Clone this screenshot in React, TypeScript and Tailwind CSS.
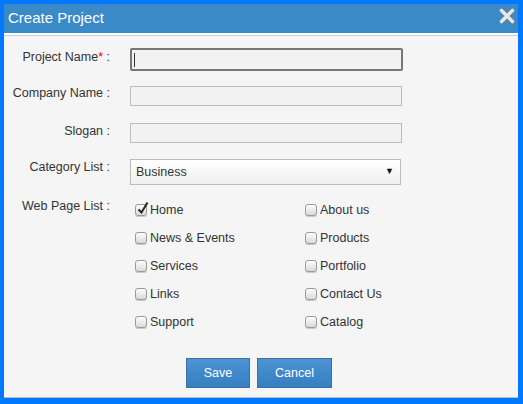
import React from "react";

const font = { fontFamily: '"Liberation Sans", Arial, sans-serif' };

function Box({ checked }: { checked?: boolean }) {
  return (
    <span className="relative inline-block w-[12px] h-[12px] rounded-[3px] border border-[#9a9a9a] bg-gradient-to-b from-[#fdfdfd] to-[#d9d9d9] shadow-[0_1px_0_#c8c8c8]">
      {checked && (
        <svg className="absolute left-[1px] top-[-4px]" width="12" height="14" viewBox="0 0 12 14">
          <path d="M1.5 8.5 L4.5 11.5 L10.5 1.5" fill="none" stroke="#222" strokeWidth="2" />
        </svg>
      )}
    </span>
  );
}

function Check({ label, checked }: { label: string; checked?: boolean }) {
  return (
    <div className="flex items-center h-[28px]">
      <Box checked={checked} />
      <span className="ml-[3px] text-[12.5px] text-[#333]">{label}</span>
    </div>
  );
}

export default function App() {
  const left = ["Home", "News & Events", "Services", "Links", "Support"];
  const right = ["About us", "Products", "Portfolio", "Contact Us", "Catalog"];
  return (
    <div className="w-[523px] h-[404px] bg-[#0078ff] pt-[4px] pl-[4px]" style={font}>
      <div className="w-[514px] h-[394px] bg-[#f5f5f5] flex flex-col">
        <div className="h-[29px] bg-[#3a8ac7] flex items-center justify-between pl-[4px] pr-[3px]">
          <span className="text-white text-[15px]">Create Project</span>
          <svg width="16" height="16" viewBox="0 0 16 16" className="mt-[-6px]">
            <path d="M2.5 2.5 L13.5 13.5 M13.5 2.5 L2.5 13.5" stroke="#8a8a8a" strokeWidth="4.5" strokeLinecap="round" />
            <path d="M2.5 2.5 L13.5 13.5 M13.5 2.5 L2.5 13.5" stroke="#e8e8e8" strokeWidth="3.2" strokeLinecap="round" />
          </svg>
        </div>
        <div className="h-[2px] bg-white" />
        <div className="h-[1px] bg-[#cfcfcf]" />
        <div className="flex-1 flex flex-col pt-[12px] text-[12.5px] text-[#333]">
          <div className="flex items-start">
            <div className="w-[106px] text-right">
              Project Name<span className="text-[#e00]">*</span> :
            </div>
            <div className="ml-[20px] w-[273px] h-[23px] border-2 border-[#777] rounded-[2px] bg-[#f2f2f2] flex items-center pl-[2px]">
              <span className="w-[1px] h-[14px] bg-[#333]" />
            </div>
          </div>
          <div className="flex items-start mt-[15px]">
            <div className="w-[106px] text-right mt-[-2px]">Company Name :</div>
            <div className="ml-[20px] w-[272px] h-[20px] border border-[#bbb] bg-[#f2f2f2]" />
          </div>
          <div className="flex items-start mt-[17px]">
            <div className="w-[106px] text-right mt-[-1px]">Slogan :</div>
            <div className="ml-[20px] w-[272px] h-[20px] border border-[#bbb] bg-[#f2f2f2]" />
          </div>
          <div className="flex items-start mt-[15px]">
            <div className="w-[106px] text-right">Category List :</div>
            <div className="ml-[20px] mt-[1px] w-[271px] h-[26px] border border-[#bbb] bg-gradient-to-b from-white to-[#f0f0f0] flex items-center justify-between pl-[5px] pr-[6px]">
              <span className="text-[12.5px] text-[#333] mt-[1px]">Business</span>
              <span className="text-[9px] text-[#111]">▼</span>
            </div>
          </div>
          <div className="flex items-start mt-[11px]">
            <div className="w-[106px] text-right pt-[1px]">Web Page List :</div>
            <div className="ml-[25px] grid grid-cols-[170px_170px]">
              <div className="flex flex-col">
                {left.map((l, i) => (
                  <Check key={l} label={l} checked={i === 0} />
                ))}
              </div>
              <div className="flex flex-col">
                {right.map((l) => (
                  <Check key={l} label={l} />
                ))}
              </div>
            </div>
          </div>
          <div className="flex justify-center gap-[7px] mt-[22px] pr-[4px]">
            <button className="w-[64px] h-[30px] border border-[#3f6f9f] bg-gradient-to-b from-[#4c94d3] to-[#357ec0] text-white text-[12.5px]">
              Save
            </button>
            <button className="w-[75px] h-[30px] border border-[#3f6f9f] bg-gradient-to-b from-[#4c94d3] to-[#357ec0] text-white text-[12.5px]">
              Cancel
            </button>
          </div>
        </div>
        <div className="h-[1px] bg-[#bdbdbd]" />
      </div>
    </div>
  );
}
